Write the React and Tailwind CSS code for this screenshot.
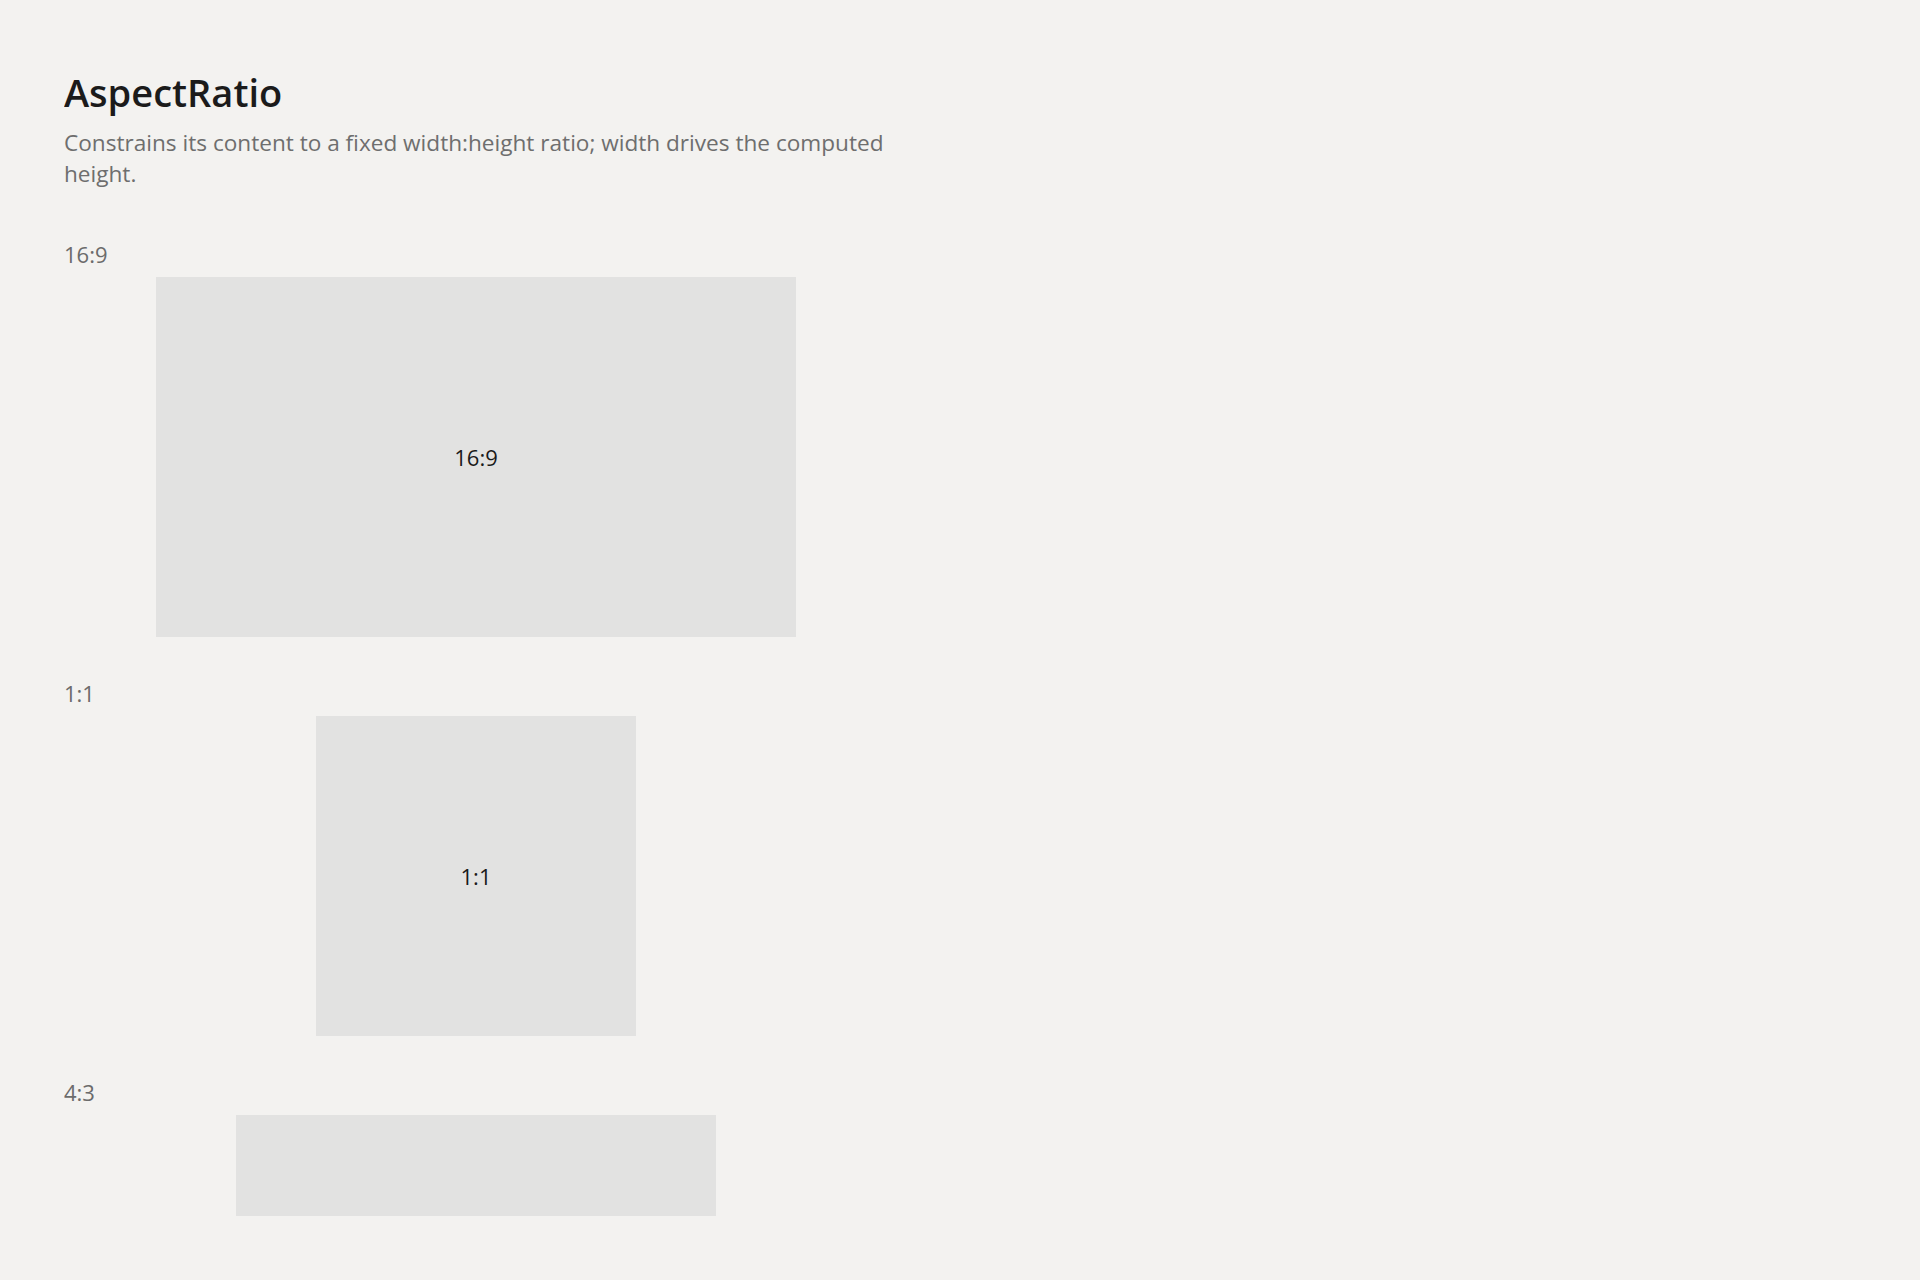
export default function App() {
  const samples = [
    { label: "16:9", ratio: "aspect-[16/9]", w_cls: "w-[640px]", inner: "16:9" },
    { label: "1:1", ratio: "aspect-square", w_cls: "w-[320px]", inner: "1:1" },
    { label: "4:3", ratio: "aspect-[4/3]", w_cls: "w-[480px]", inner: "4:3" },
  ];

  return (
    <div
      className="h-screen overflow-hidden bg-[#f3f2f0] px-16 py-16 flex flex-col"
      style={{ fontFamily: '"Open Sans", "Noto Sans", sans-serif' }}
    >
      <div className="flex-1 overflow-hidden">
        <div className="w-[824px]">
          <h1 className="mt-1 text-[38px] leading-[48px] font-semibold text-[#1b1b1b]">
            AspectRatio
          </h1>
          <p className="mt-[11px] w-[860px] text-[22.6px] leading-[31px] text-[#6e6e6e]">
            Constrains its content to a fixed width:height ratio; width drives the computed height.
          </p>

          <div className="mt-[50px] flex flex-col gap-[41px]">
            {samples.map((s) => (
              <section key={s.label}>
                <div className="mb-2 text-[22px] leading-[30px] text-[#6b6b6b]">{s.label}</div>
                <div className="flex justify-center">
                  <div
                    className={`${s.w_cls} ${s.ratio} bg-[#e2e2e1] flex items-center justify-center text-[22px] text-[#1a1a1a]`}
                  >
                    {s.inner}
                  </div>
                </div>
              </section>
            ))}
          </div>
        </div>
      </div>
    </div>
  );
}
